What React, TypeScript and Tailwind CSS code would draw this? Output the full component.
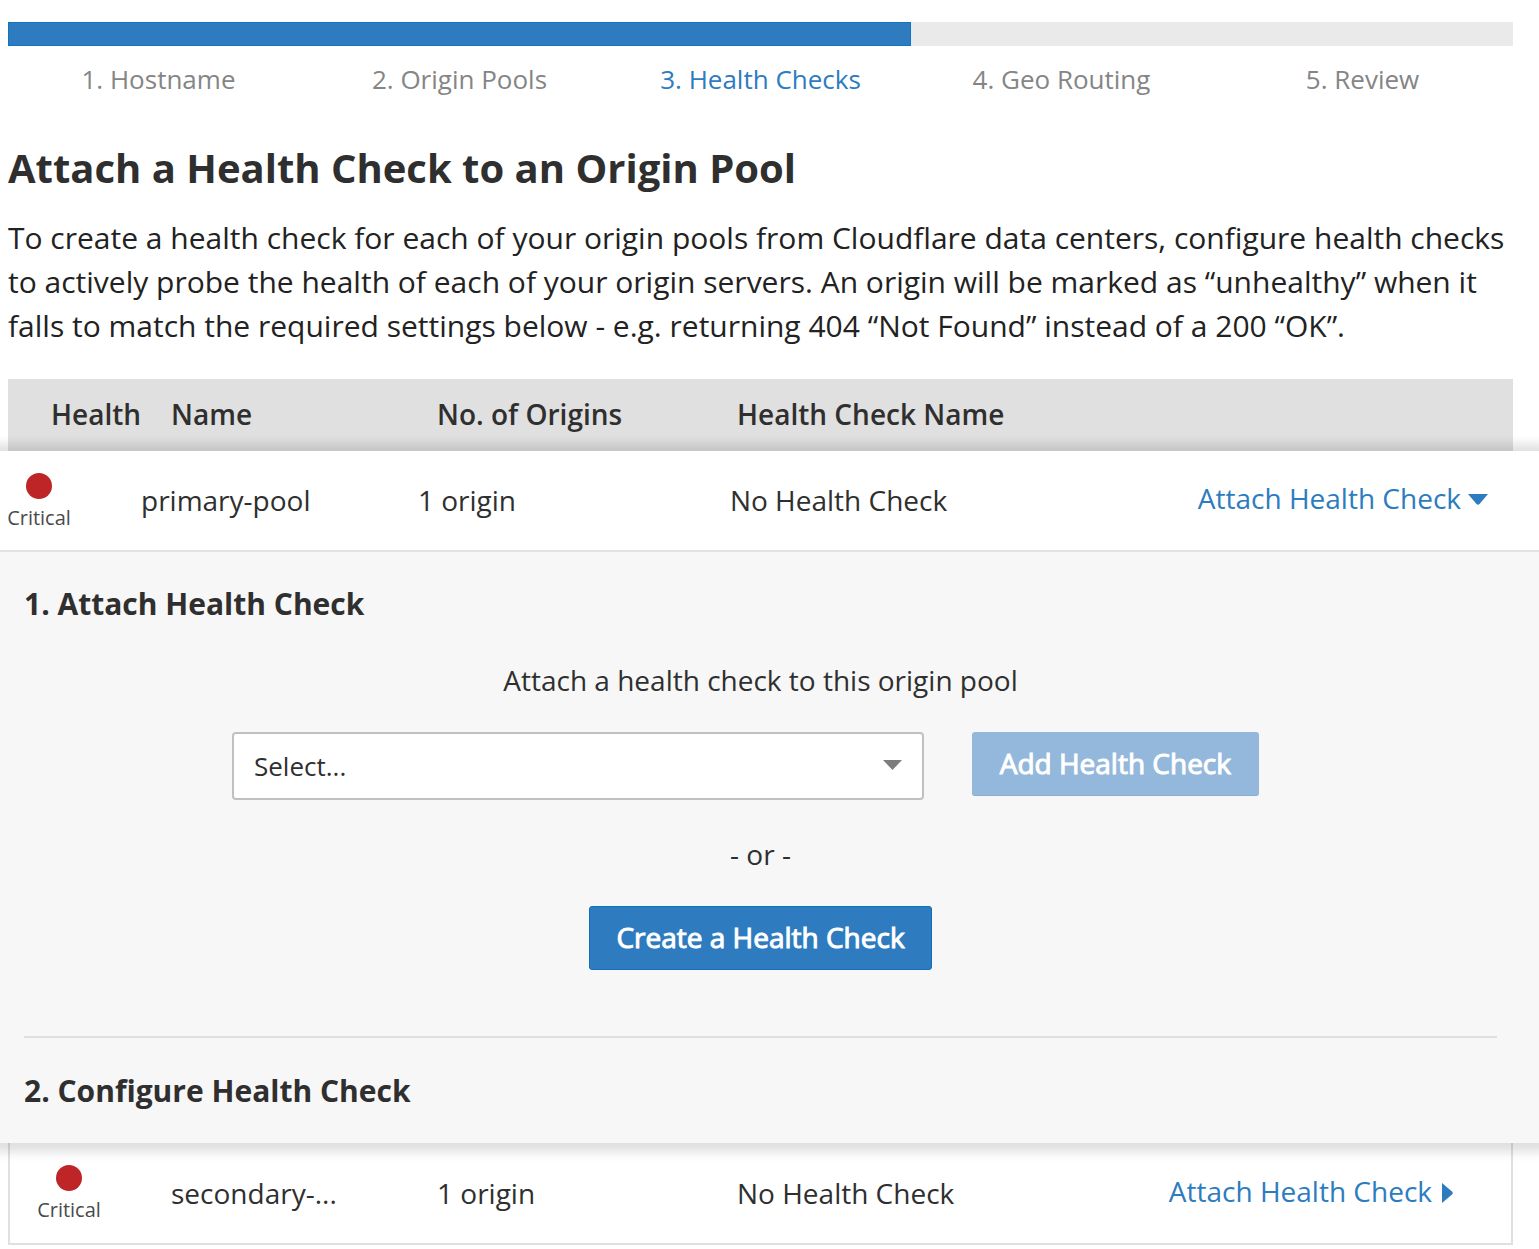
import { useState } from "react";

const steps = ["1. Hostname", "2. Origin Pools", "3. Health Checks", "4. Geo Routing", "5. Review"];
const currentStep = 3;

function CriticalStatus() {
  return (
    <div className="flex w-[62px] flex-col items-center">
      <span className="size-[26px] rounded-full bg-[#bd2527]" />
      <span className="mt-[6px] text-[20px] leading-[26px] text-[#4a4a4a]">Critical</span>
    </div>
  );
}

function AttachButton({ open }: { open: boolean }) {
  return (
    <button type="button" aria-expanded={open} className="inline-flex items-center text-[#2c7cbf]">
      Attach Health Check
      {open ? (
        <svg className="mt-1 ml-[7px] h-[11px] w-5" viewBox="0 0 20 11" aria-hidden="true">
          <path d="M0 0h20l-8.5 10q-1.5 1.5-3 0z" fill="currentColor" />
        </svg>
      ) : (
        <svg className="mt-1 ml-[10px] h-5 w-[11px]" viewBox="0 0 11 20" aria-hidden="true">
          <path d="M0 0v20l10-8.5q1.5-1.5 0-3z" fill="currentColor" />
        </svg>
      )}
    </button>
  );
}

export default function App() {
  const [check, setCheck] = useState("");

  return (
    <main className="overflow-x-hidden bg-white pt-[22px] pb-1 font-['Open_Sans',sans-serif] text-[28px] leading-[44px] text-[#2f2f2f]">
      <header className="ml-2 mr-[26px]">
        <div role="progressbar" aria-label="Setup progress" aria-valuemin={0} aria-valuemax={5} aria-valuenow={currentStep} className="h-6 bg-[#eaeaea]">
          <div className="h-full w-3/5 border border-[#0f74c2] bg-[#2f7bbf]" />
        </div>
        <ol className="mt-[11px] grid grid-cols-5 text-center text-[26px] text-[#858585]">
          {steps.map((step, i) => (
            <li key={step} className={i + 1 === currentStep ? "text-[#2c7cbf]" : ""}>
              {step}
            </li>
          ))}
        </ol>
        <h1 className="mt-[39px] text-[40px] leading-[56px] font-bold">Attach a Health Check to an Origin Pool</h1>
        <p className="mt-5 text-[30px] text-[#222]">
          To create a health check for each of your origin pools from Cloudflare data centers, configure health checks to
          actively probe the health of each of your origin servers. An origin will be marked as “unhealthy” when it falls
          to match the required settings below - e.g. returning 404 “Not Found” instead of a 200 “OK”.
        </p>
      </header>

      <table className="mt-[31px] block text-left">
        <thead className="ml-2 mr-[26px] block bg-[#e0e0e0]">
          <tr className="grid h-[72px] grid-cols-[163px_266fr_300fr_716fr] items-center pr-[60px] pb-[2px]">
            <th className="pl-[43px] font-semibold">Health</th>
            <th className="font-semibold">Name</th>
            <th className="font-semibold">No. of Origins</th>
            <th className="font-semibold">Health Check Name</th>
          </tr>
        </thead>

        <tbody className="relative block bg-white shadow-[0_1px_10px_8px_rgba(0,0,0,0.13)]">
          <tr className="grid grid-cols-[141px_277fr_312fr_468fr_290fr] items-center border-b-2 border-[#e2e2e2] pr-[51px]">
            <td className="pt-[22px] pb-[19px] pl-2"><CriticalStatus /></td>
            <td className="pb-[2px]">primary-pool</td>
            <td className="pb-[2px]">1 origin</td>
            <td className="pb-[2px]">No Health Check</td>
            <td className="flex justify-end pb-[6px] whitespace-nowrap"><AttachButton open /></td>
          </tr>
          <tr className="block">
            <td colSpan={5} className="block bg-[#f7f7f7] pr-[42px] pl-6">
              <section className="border-b-2 border-[#dfdfdf] pt-[30px] pb-[66px]">
                <h2 className="text-[30px] font-bold">1. Attach Health Check</h2>
                <label htmlFor="health-check" className="mt-8 block text-center">
                  Attach a health check to this origin pool
                </label>
                <div className="mt-[30px] mr-[238px] ml-52 flex gap-12">
                  <div className="relative flex-1">
                    <select
                      id="health-check"
                      value={check}
                      onChange={(e) => setCheck(e.target.value)}
                      className="block h-[68px] w-full appearance-none rounded border-2 border-[#bfc0c2] bg-white px-5 text-[26px]"
                    >
                      <option value="">Select...</option>
                    </select>
                    <svg className="pointer-events-none absolute top-7 right-[22px] h-[10px] w-[19px]" viewBox="0 0 19 10" aria-hidden="true">
                      <path d="M0 0h19l-9.5 10z" fill="#7d7d7d" />
                    </svg>
                  </div>
                  <button type="button" disabled className="h-16 rounded-[3px] border-b border-[#86aed1] bg-[#94b8db] px-7 pb-[2px] text-white [-webkit-text-stroke:1px_currentColor]">
                    Add Health Check
                  </button>
                </div>
                <p className="mt-8 text-center">- or -</p>
                <div className="mt-[30px] flex justify-center">
                  <button type="button" className="h-16 rounded-[3px] border border-[#0f70ba] bg-[#2f7bbf] px-[26px] pb-[2px] text-white [-webkit-text-stroke:1px_currentColor]">
                    Create a Health Check
                  </button>
                </div>
              </section>
              <h2 className="pt-[31px] pb-[30px] text-[30px] font-bold">2. Configure Health Check</h2>
            </td>
          </tr>
        </tbody>

        <tbody className="mr-[26px] ml-2 block">
          <tr className="grid grid-cols-[161px_266fr_300fr_426fr_290fr] items-center border-x-2 border-b-2 border-[#e0e0e0] pr-[58px]">
            <td className="pt-[22px] pb-5 pl-7"><CriticalStatus /></td>
            <td>secondary-...</td>
            <td>1 origin</td>
            <td>No Health Check</td>
            <td className="flex justify-end pb-1 whitespace-nowrap"><AttachButton open={false} /></td>
          </tr>
        </tbody>
      </table>
    </main>
  );
}
